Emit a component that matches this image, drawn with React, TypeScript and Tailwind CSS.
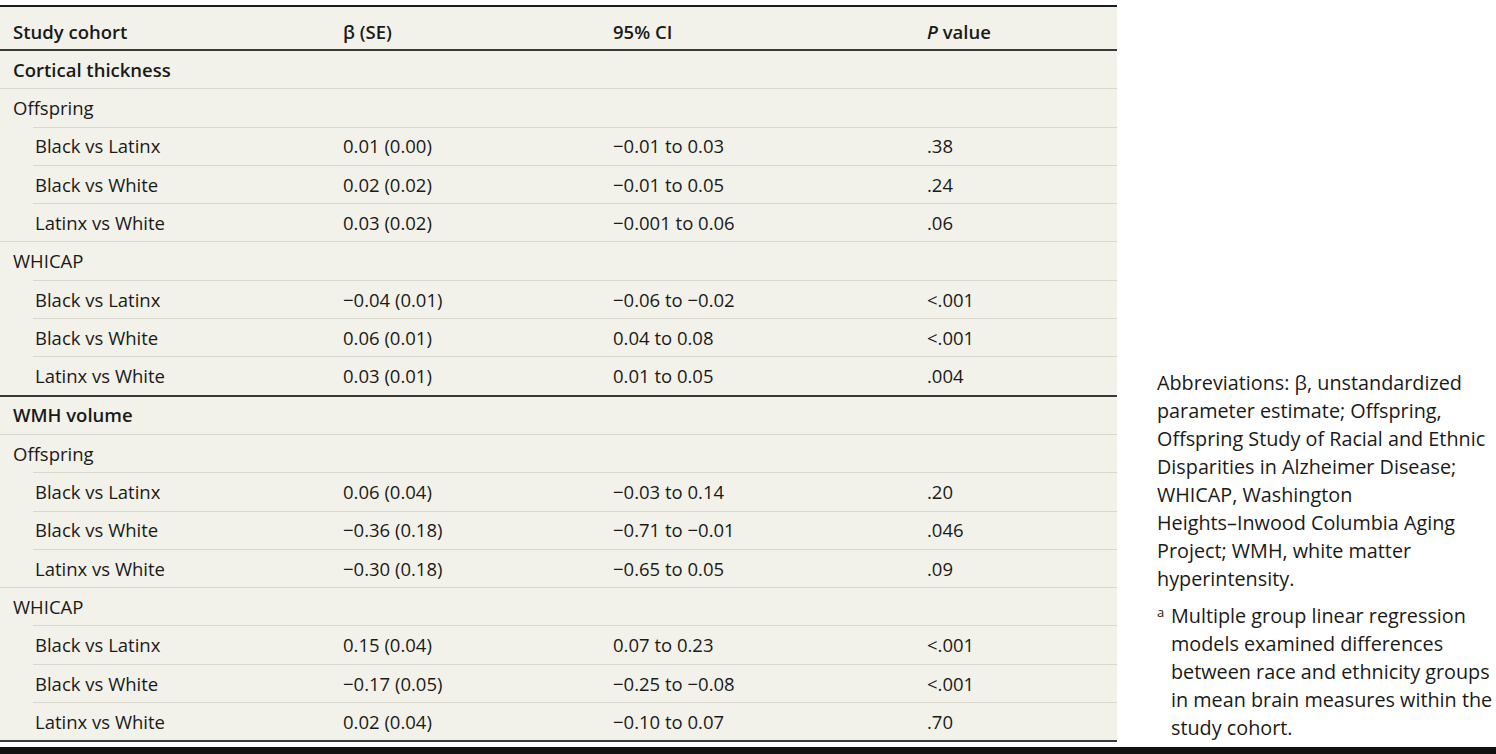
import React from "react";

type Row = {
  label: string;
  kind: "section" | "group" | "item";
  beta?: string;
  ci?: string;
  p?: string;
  line: "full" | "indent" | "dark";
};

const rows: Row[] = [
  { label: "Cortical thickness", kind: "section", line: "full" },
  { label: "Offspring", kind: "group", line: "indent" },
  { label: "Black vs Latinx", kind: "item", beta: "0.01 (0.00)", ci: "−0.01 to 0.03", p: ".38", line: "indent" },
  { label: "Black vs White", kind: "item", beta: "0.02 (0.02)", ci: "−0.01 to 0.05", p: ".24", line: "indent" },
  { label: "Latinx vs White", kind: "item", beta: "0.03 (0.02)", ci: "−0.001 to 0.06", p: ".06", line: "full" },
  { label: "WHICAP", kind: "group", line: "indent" },
  { label: "Black vs Latinx", kind: "item", beta: "−0.04 (0.01)", ci: "−0.06 to −0.02", p: "<.001", line: "indent" },
  { label: "Black vs White", kind: "item", beta: "0.06 (0.01)", ci: "0.04 to 0.08", p: "<.001", line: "indent" },
  { label: "Latinx vs White", kind: "item", beta: "0.03 (0.01)", ci: "0.01 to 0.05", p: ".004", line: "dark" },
  { label: "WMH volume", kind: "section", line: "full" },
  { label: "Offspring", kind: "group", line: "indent" },
  { label: "Black vs Latinx", kind: "item", beta: "0.06 (0.04)", ci: "−0.03 to 0.14", p: ".20", line: "indent" },
  { label: "Black vs White", kind: "item", beta: "−0.36 (0.18)", ci: "−0.71 to −0.01", p: ".046", line: "indent" },
  { label: "Latinx vs White", kind: "item", beta: "−0.30 (0.18)", ci: "−0.65 to 0.05", p: ".09", line: "full" },
  { label: "WHICAP", kind: "group", line: "indent" },
  { label: "Black vs Latinx", kind: "item", beta: "0.15 (0.04)", ci: "0.07 to 0.23", p: "<.001", line: "indent" },
  { label: "Black vs White", kind: "item", beta: "−0.17 (0.05)", ci: "−0.25 to −0.08", p: "<.001", line: "indent" },
  { label: "Latinx vs White", kind: "item", beta: "0.02 (0.04)", ci: "−0.10 to 0.07", p: ".70", line: "dark" },
];

const Divider = ({ line }: { line: Row["line"] }) => {
  if (line === "dark") return <div className="h-[2px] bg-[#3a3a36]" />;
  if (line === "indent") return <div className="ml-[33px] h-px bg-[#d9d7cc]" />;
  return <div className="h-px bg-[#d9d7cc]" />;
};

const App = () => (
  <div
    className="flex h-[754px] w-[1496px] flex-col bg-white text-[18.5px] text-[#1a1a18]"
    style={{ fontFamily: "'Open Sans', Lato, sans-serif" }}
  >
    <div className="flex flex-1 pt-[5px]">
      <div className="h-fit w-[1117px] border-t-[2px] border-[#1c1c1a] bg-[#f3f2ea]">
        <div className="flex h-[42px] items-center pt-[8px] font-semibold">
          <div className="w-[330px] pl-[13px]">Study cohort</div>
          <div className="w-[270px] pl-[13px]">β (SE)</div>
          <div className="w-[314px] pl-[13px]">95% CI</div>
          <div className="pl-[13px]">
            <i>P</i> value
          </div>
        </div>
        <div className="h-[2px] bg-[#3a3a36]" />
        {rows.map((r, i) => (
          <div key={i}>
            <div className="flex h-[37.3px] items-center">
              <div
                className={
                  "w-[330px] " +
                  (r.kind === "item" ? "pl-[35px]" : "pl-[13px]") +
                  (r.kind === "section" ? " font-semibold" : "")
                }
              >
                {r.label}
              </div>
              <div className="w-[270px] pl-[13px]">{r.beta}</div>
              <div className="w-[314px] pl-[13px]">{r.ci}</div>
              <div className="pl-[13px]">{r.p}</div>
            </div>
            <Divider line={r.line} />
          </div>
        ))}
      </div>
      <div className="flex flex-1 flex-col justify-end whitespace-nowrap pb-[5px] pl-[40px] text-[19.8px] leading-[28px]">
        <p>
          Abbreviations: β, unstandardized
          <br />
          parameter estimate; Offspring,
          <br />
          Offspring Study of Racial and Ethnic
          <br />
          Disparities in Alzheimer Disease;
          <br />
          WHICAP, Washington
          <br />
          Heights–Inwood Columbia Aging
          <br />
          Project; WMH, white matter
          <br />
          hyperintensity.
        </p>
        <div className="mt-[9px] flex">
          <span className="w-[14px] text-[13px] leading-[20px]">a</span>
          <p>
            Multiple group linear regression
            <br />
            models examined differences
            <br />
            between race and ethnicity groups
            <br />
            in mean brain measures within the
            <br />
            study cohort.
          </p>
        </div>
      </div>
    </div>
    <div className="h-[7px] bg-[#111]" />
  </div>
);

export default App;
